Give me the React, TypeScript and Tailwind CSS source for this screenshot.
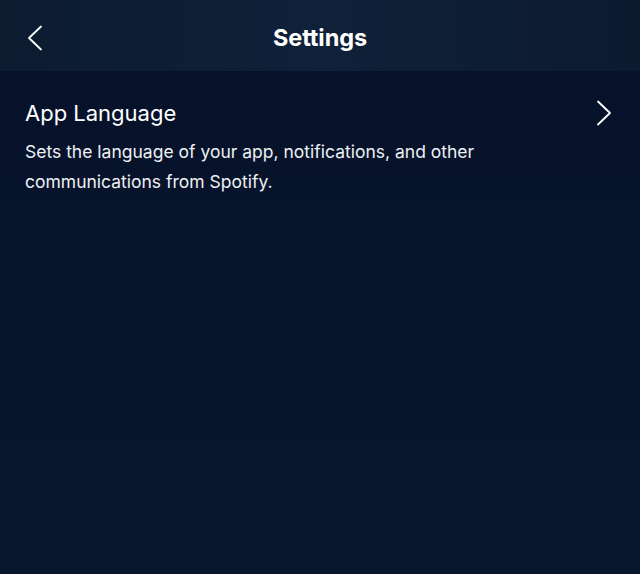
import React from "react";

const Chevron = ({ dir }: { dir: "left" | "right" }) => (
  <svg width="18" height="26" viewBox="0 0 18 26" fill="none">
    <path
      d={dir === "left" ? "M15 1.5 L3 13 L15 24.5" : "M3 1.5 L15 13 L3 24.5"}
      stroke="#ffffff"
      strokeWidth="1.8"
      strokeLinecap="round"
      strokeLinejoin="round"
    />
  </svg>
);

const App = () => {
  return (
    <div
      className="flex h-[574px] w-[640px] flex-col overflow-hidden bg-[#081730] text-white"
      style={{ fontFamily: "Inter, 'Noto Sans', sans-serif" }}
    >
      <header className="relative flex h-[71px] items-center justify-center bg-gradient-to-r from-[#0c1b30] via-[#0f2139] to-[#0c1a30] pt-[5px]">
        <button className="absolute left-[26px] top-[25px]">
          <Chevron dir="left" />
        </button>
        <h1 className="text-[23.5px] font-bold tracking-[-0.1px]">Settings</h1>
      </header>
      <main className="flex-1 bg-gradient-to-b from-[#07122a] to-[#08172e] px-[25px] pt-[28px]">
        <div className="flex items-start justify-between">
          <h2 className="text-[22px] leading-[28px]">App Language</h2>
          <span className="mt-[1px] mr-[2px]">
            <Chevron dir="right" />
          </span>
        </div>
        <p className="mt-[10px] max-w-[500px] text-[17.5px] leading-[30px] text-[#eef0f4]">
          Sets the language of your app, notifications, and other communications from Spotify.
        </p>
      </main>
    </div>
  );
};

export default App;
